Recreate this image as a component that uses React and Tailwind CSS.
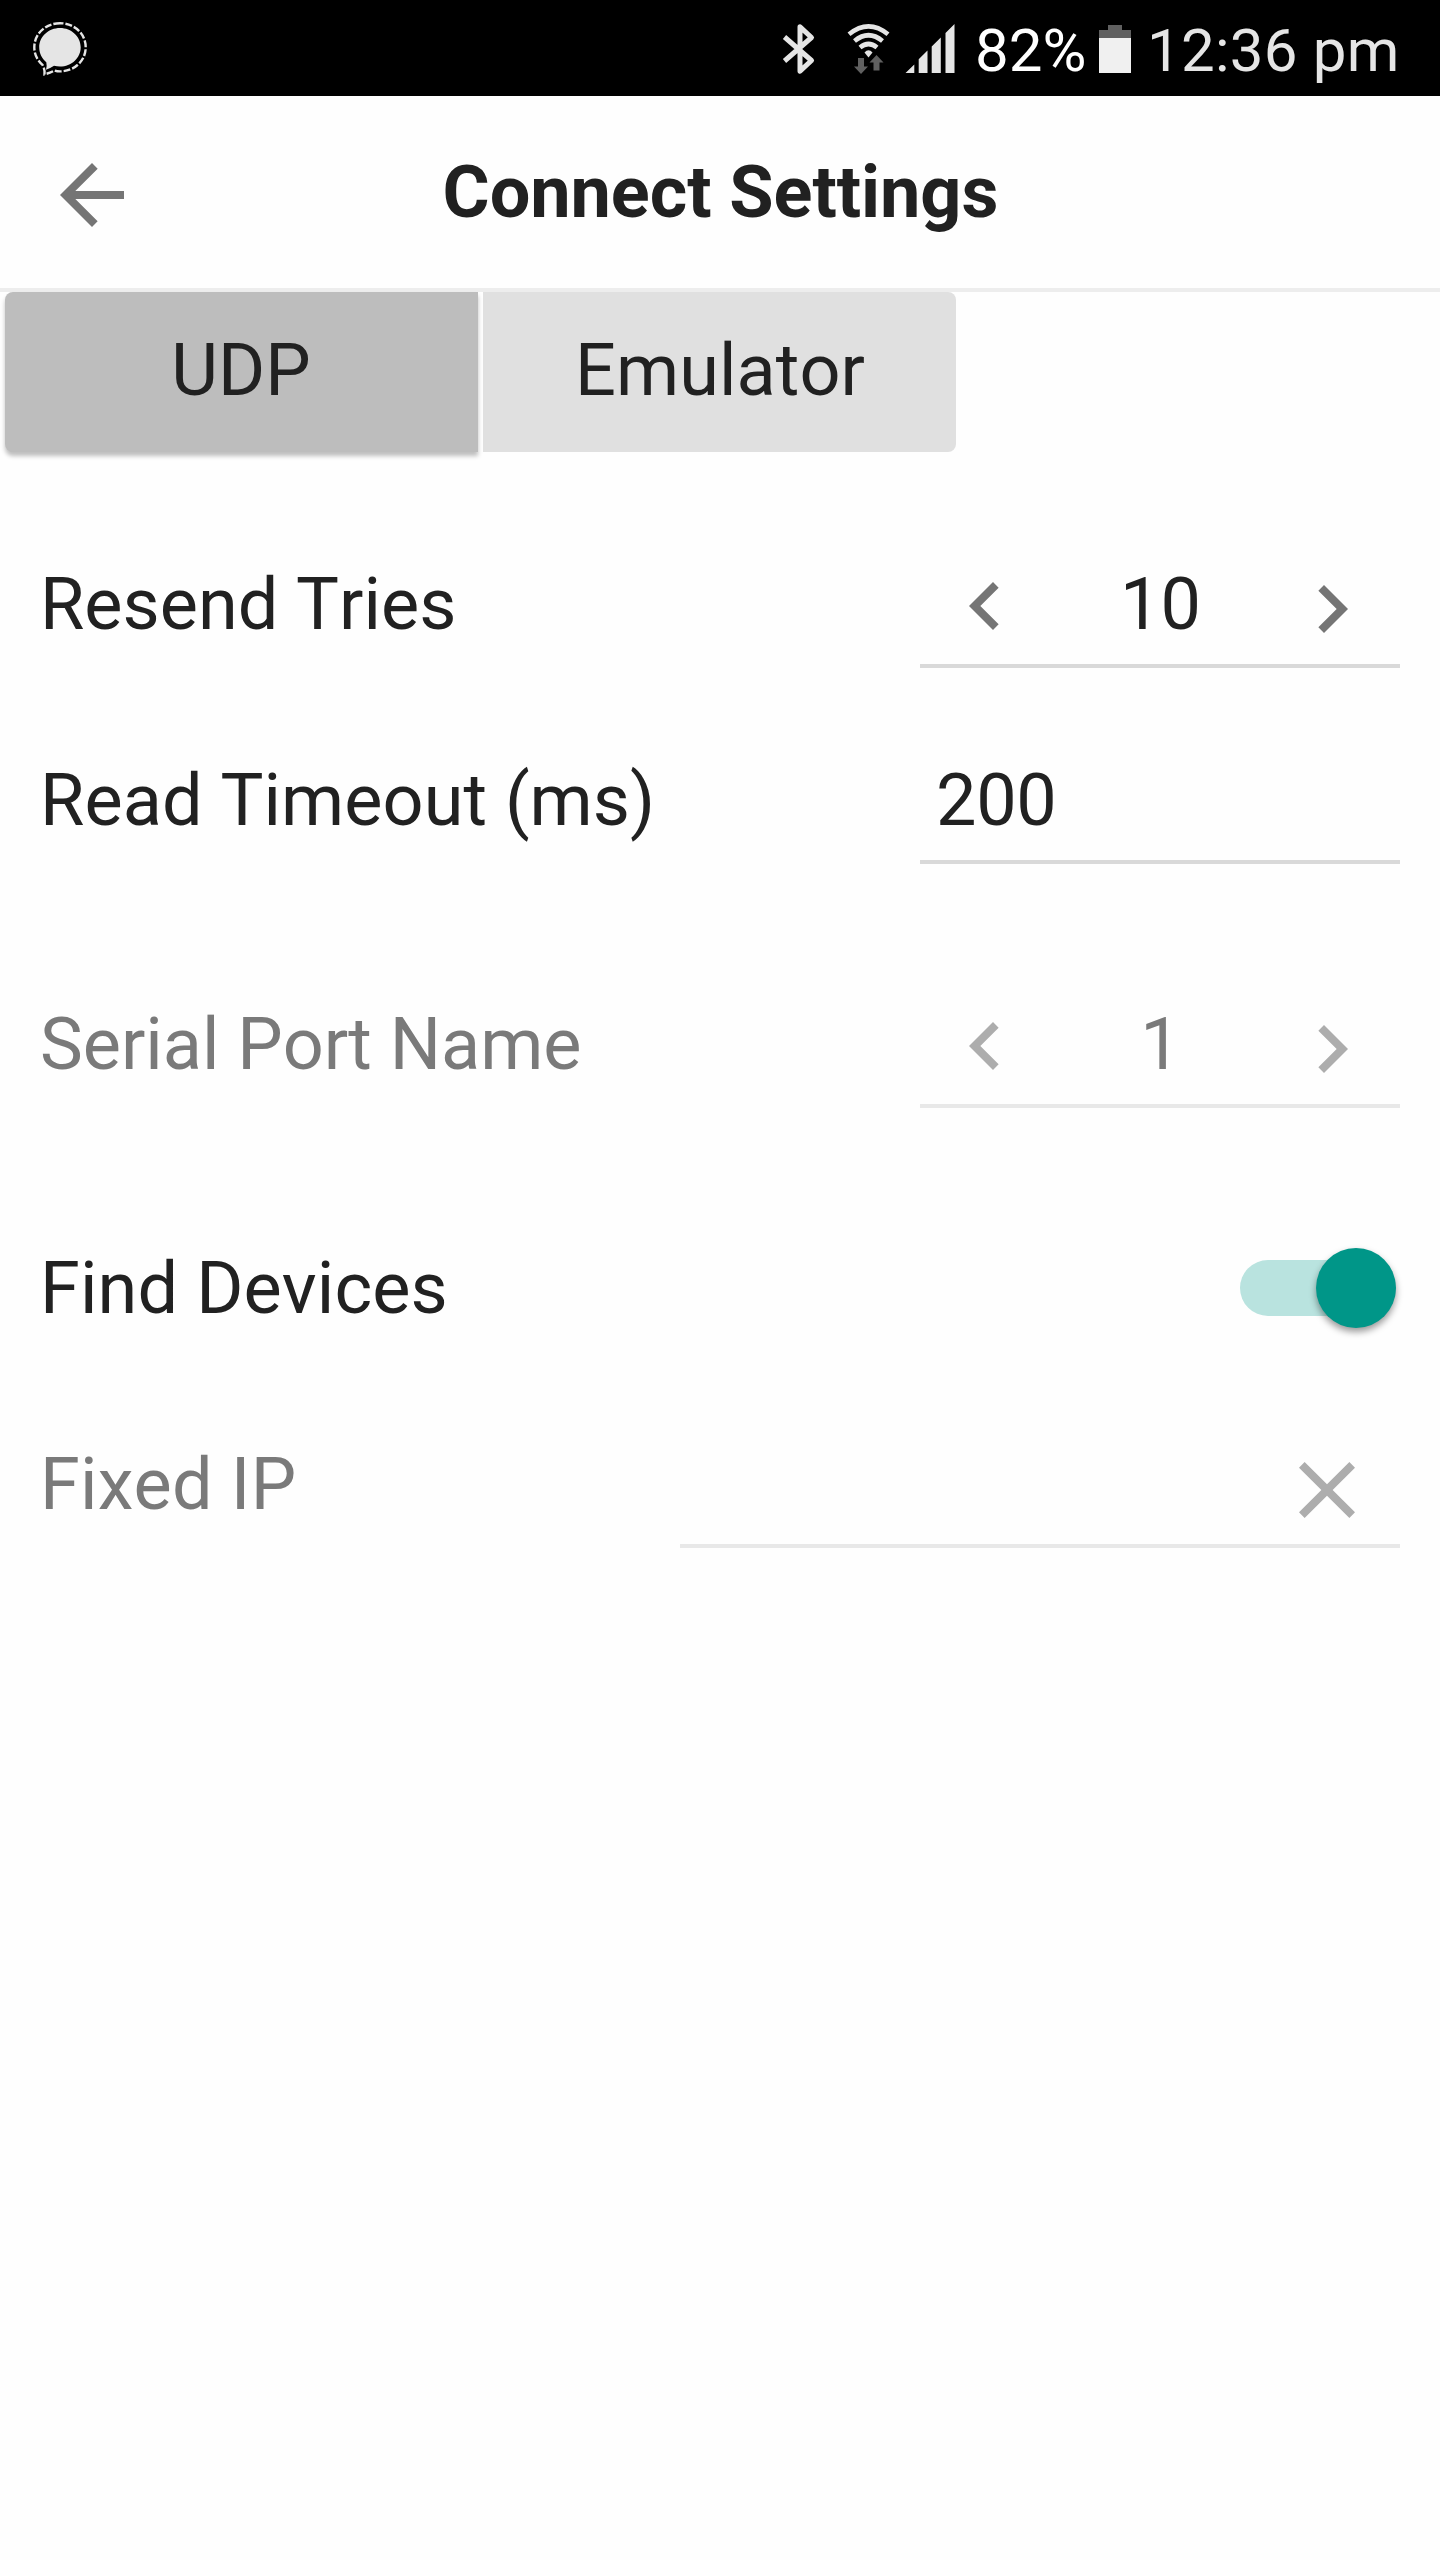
function MaterialIcon({ d, className }) {
  return (
    <svg viewBox="0 0 24 24" className={`block size-24 shrink-0 ${className}`} fill="currentColor">
      <path d={d} />
    </svg>
  );
}

const ICONS = {
  back: "M20 11H7.83l5.59-5.59L12 4l-8 8 8 8 1.41-1.41L7.83 13H20v-2z",
  left: "M15.41 7.41L14 6l-6 6 6 6 1.41-1.41L10.83 12z",
  right: "M10 6L8.59 7.41 13.17 12l-4.58 4.59L10 18l6-6z",
  close: "M19 6.41L17.59 5 12 10.59 6.41 5 5 6.41 10.59 12 5 17.59 6.41 19 12 13.41 17.59 19 19 17.59 13.41 12z",
};

function StatusBar() {
  return (
    <header className="flex h-24 bg-black text-[60px] leading-[70px] text-[#e5e5e5]">
      <svg viewBox="0 0 56 96" className="ml-8 h-24 w-14 shrink-0">
        <path d="M28 28C39.500 28 48.700 36.600 48.700 47.300S39.500 66.600 28 66.600Q25 66.600 22 65.800Q18 68.500 14 69.800Q15.200 66 14.300 62.300C10 58.500 7.200 53.500 7.200 47.300C7.200 36.600 16.500 28 28 28Z" fill="#e5e5e5" />
        <path d="M28 23.200C42 23.200 53.700 33.500 53.700 47.300S42 71.400 28 71.400Q25 71.400 22.500 70.500Q18 73 12.500 74.300Q13 69 10.500 64.800C5.500 60.500 2.300 54.500 2.300 47.300C2.300 33.500 14 23.200 28 23.200Z" fill="none" stroke="#e5e5e5" strokeWidth="2.400" strokeDasharray="6.900 2" strokeDashoffset="3.450" />
      </svg>
      <svg viewBox="0 0 34 96" className="ml-auto h-24 w-[34px] shrink-0" fill="none" stroke="#e5e5e5" strokeWidth="5" strokeLinejoin="round">
        <path d="M2.500 37L29.500 60.500L18 71.200V26.800L29.500 37.500L2.500 61" />
      </svg>
      <svg viewBox="0 0 44 96" className="ml-[31px] h-24 w-11 shrink-0">
        <g fill="none" stroke="#e5e5e5" strokeWidth="4.600">
          <path d="M2 34.300Q21.500 18.500 41 34.300" />
          <path d="M7.500 41Q21.500 29.500 35.500 41" />
          <path d="M13 47.500Q21.500 40.500 30 47.500" />
        </g>
        <path d="M17.500 52.500Q21.500 48 25.500 52.500L21.500 57.500Z" fill="#e5e5e5" />
        <path d="M11 58h6v8.500h4L14 74l-7-7.500h4zM26.500 70.500h6V62.500h4L29.500 55l-7 7.500h4z" fill="#606060" />
      </svg>
      <svg viewBox="0 0 50 96" className="ml-[14px] h-24 w-[50px] shrink-0" fill="#e5e5e5">
        <path d="M.5 73L9.300 64.500V73zM13.700 73V59.300L22.500 50.500V73zM26.700 73V46.500L35.800 37.500V73zM40.500 73V33L49.500 24V73z" />
      </svg>
      <span className="ml-5 w-[119px] pt-4 whitespace-nowrap text-white">82%</span>
      <svg viewBox="0 0 32 96" className="ml-[5px] h-24 w-8 shrink-0" shapeRendering="crispEdges">
        <path d="M9 25h14v5h9v8H0v-8h9z" fill="#606060" />
        <path d="M0 38h32v35H0z" fill="#f0f0f0" />
      </svg>
      <span className="mr-10 ml-4 w-[253px] pt-4 tracking-[0.25px] whitespace-nowrap">12:36 pm</span>
    </header>
  );
}

function Row({ label, disabled, className, labelClassName, children }) {
  return (
    <div className={`flex h-[136px] justify-between ${disabled ? "text-[#7a7a7a]" : "text-[#212121]"} ${className ?? ""}`}>
      <span className={`pt-[25px] whitespace-nowrap ${labelClassName ?? ""}`}>{label}</span>
      {children}
    </div>
  );
}

function Stepper({ value, disabled }) {
  const icon = disabled ? "text-[#adadad]" : "text-[#757575]";
  const line = disabled ? "border-[#e8e8e8]" : "border-[#d9d9d9]";
  return (
    <div className={`flex w-[480px] justify-between border-b-4 pr-5 pl-[17px] ${line}`}>
      <MaterialIcon d={ICONS.left} className={`mt-[26px] ${icon}`} />
      <span className="pt-[25px] pl-[4px]">{value}</span>
      <MaterialIcon d={ICONS.right} className={`mt-[29px] ${icon}`} />
    </div>
  );
}

export default function App() {
  return (
    <div className="h-[2560px] w-[1440px] overflow-hidden bg-[#fefefe] font-[Roboto,sans-serif] text-[72px] leading-[96px] text-[#212121] [font-kerning:none]">
      <StatusBar />
      <div className="grid h-[196px] grid-cols-[1fr_auto_1fr] border-b-4 border-[#ededed]">
        <MaterialIcon d={ICONS.back} className="mt-[50.500px] ml-11 text-[#757575]" />
        <h1 className="pt-[49px] pl-px font-bold tracking-[-0.05px]">Connect Settings</h1>
      </div>
      <div className="flex gap-[5px] pl-[5px]">
        <button className="h-40 w-[473px] rounded-l-lg bg-[#bdbdbd] pr-px pb-0.5 shadow-[0_4px_4px_rgba(0,0,0,0.25)]">UDP</button>
        <button className="h-40 w-[473px] rounded-r-lg bg-[#e0e0e0] pb-0.5 pl-px tracking-[0.1px]">Emulator</button>
      </div>
      <main className="px-10 pt-20">
        <Row label="Resend Tries">
          <Stepper value="10" />
        </Row>
        <Row label="Read Timeout (ms)" className="mt-[60px]" labelClassName="tracking-[0.06px]">
          <div className="w-[480px] border-b-4 border-[#d9d9d9] pt-[25px] pl-4 tracking-[-0.3px]">200</div>
        </Row>
        <Row label="Serial Port Name" disabled className="mt-[108px]">
          <Stepper value="1" disabled />
        </Row>
        <Row label="Find Devices" className="mt-[108px]" labelClassName="tracking-[0.12px]">
          <div className="mt-11 mr-1 flex h-14 w-[156px] items-center justify-end rounded-full bg-[#b9e3df]">
            <div className="size-20 shrink-0 rounded-full bg-[#009688] shadow-[0_4px_7px_rgba(0,0,0,0.4)]" />
          </div>
        </Row>
        <Row label="Fixed IP" disabled className="mt-[60px]" labelClassName="tracking-[0.2px]">
          <div className="flex w-[720px] justify-end border-b-4 border-[#e8e8e8] pr-[25.500px]">
            <MaterialIcon d={ICONS.close} className="mt-[30px] text-[#adadad]" />
          </div>
        </Row>
      </main>
    </div>
  );
}
